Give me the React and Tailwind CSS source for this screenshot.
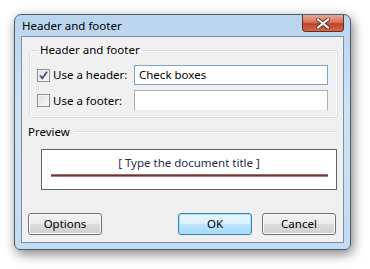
import React from "react";

function Btn({ children, def, className = "" }) {
  return (
    <button
      className={
        "h-[22px] w-[74px] rounded-[3px] border text-[11.5px] leading-none text-black " +
        (def
          ? "border-[#3c7fb1] bg-[linear-gradient(#eaf6fd_0%,#d9f0fc_50%,#bee6fd_50%,#a7d9f5_100%)] shadow-[inset_0_0_0_1px_#9fe2ff] "
          : "border-[#707070] bg-[linear-gradient(#f2f2f2_0%,#ebebeb_50%,#dddddd_50%,#cfcfcf_100%)] shadow-[inset_0_0_0_1px_#fcfcfc] ") +
        className
      }
    >
      {children}
    </button>
  );
}

function Check({ checked }) {
  return (
    <div className="flex h-[13px] w-[13px] items-center justify-center border border-[#8e8f8f] bg-[linear-gradient(135deg,#dcdcdc,#fbfbfb)] shadow-[inset_0_0_0_1px_#f4f4f4]">
      {checked && (
        <svg width="11" height="11" viewBox="0 0 11 11">
          <path d="M2 5.5 L4.3 8.3 L9 1.8" fill="none" stroke="#3b4e8c" strokeWidth="1.7" />
        </svg>
      )}
    </div>
  );
}

export default function App() {
  return (
    <div className="h-[269px] w-[370px] bg-white pl-[14px] pt-[14px] font-['Noto_Sans',sans-serif] text-[11.5px] text-black">
      <div className="relative flex h-[236px] w-[337px] flex-col rounded-t-[7px] rounded-b-[6px] border border-[#4b5e70] bg-[linear-gradient(180deg,#b9d4ee_0%,#cfe3f5_40%,#c4dcf2_100%)] shadow-[2px_4px_12px_rgba(0,0,0,0.5)]">
        <div className="flex h-[21px] items-center pl-[7px] leading-none">Header and footer</div>
        <div className="absolute right-[6px] top-0 flex h-[17px] w-[42px] items-center justify-center rounded-b-[4px] border border-t-0 border-[#6b2d20] bg-[linear-gradient(#e9a898_0%,#d7735c_45%,#c4432a_55%,#cf6a4c_100%)]">
          <svg width="14" height="11" viewBox="0 0 14 11">
            <path d="M2 1.5 L12 9.5 M12 1.5 L2 9.5" stroke="#4a2a22" strokeWidth="3.6" strokeLinecap="round" />
            <path d="M2 1.5 L12 9.5 M12 1.5 L2 9.5" stroke="#ffffff" strokeWidth="2.2" strokeLinecap="round" />
          </svg>
        </div>
        <div className="mx-[6px] flex h-[207px] flex-col border border-[#7b8fa5] bg-[#f0f0f0]">
          <fieldset className="ml-[7px] mr-[6px] mt-[5px] rounded-[3px] border border-[#d5dfe5] px-[7px] pb-[6px] pr-[9px] pt-[7px] shadow-[inset_0_0_0_1px_#ffffff]">
            <legend className="ml-[1px] px-[2px] leading-[16px]">Header and footer</legend>
            <div className="flex h-[20px] items-center">
              <div className="flex w-[97px] items-center gap-[3px]">
                <Check checked />
                <span>Use a header:</span>
              </div>
              <div className="flex h-[20px] w-[194px] items-center border border-[#7da2ce] bg-white pl-[4px]">Check boxes</div>
            </div>
            <div className="mt-[5px] flex h-[21px] items-center">
              <div className="flex w-[97px] items-center gap-[3px]">
                <Check />
                <span>Use a footer:</span>
              </div>
              <div className="h-[21px] w-[194px] border border-[#abadb3] border-b-[#e3e9ef] bg-white" />
            </div>
          </fieldset>
          <div className="ml-[6px] mr-[7px] mt-[6px] flex items-center">
            <span className="leading-[16px]">Preview</span>
            <div className="ml-[4px] h-[2px] flex-1 border-t border-[#d5dfe5] border-b-white border-b" />
          </div>
          <div className="ml-[19px] mr-[6px] mt-[9px] flex h-[41px] flex-col items-center border border-[#646464] bg-white">
            <div className="mt-[5px] leading-[16px] text-[#1f2d4a]">[ Type the document title ]</div>
            <div className="mt-[3px] h-[3px] w-[277px] bg-[linear-gradient(#b89a9a,#6e3434_40%,#6e3434_60%,#c9b2b2)]" />
          </div>
          <div className="ml-[6px] mr-[7px] mt-[23px] flex items-center">
            <Btn>Options</Btn>
            <Btn def className="ml-auto">OK</Btn>
            <Btn className="ml-[10px]">Cancel</Btn>
          </div>
        </div>
      </div>
    </div>
  );
}
